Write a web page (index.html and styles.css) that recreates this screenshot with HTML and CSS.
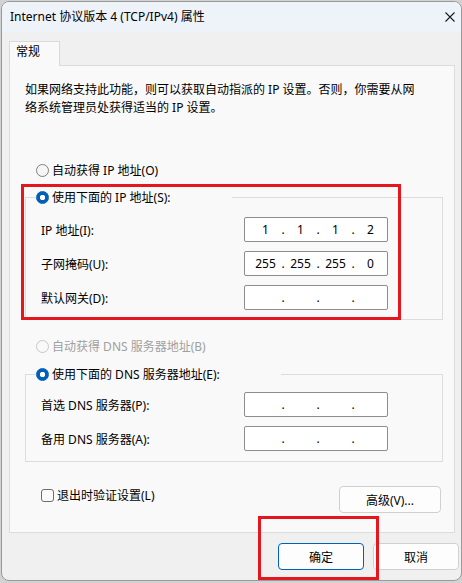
FILE: index.html
```html
<!DOCTYPE html>
<html lang="zh-CN">
<head>
<meta charset="utf-8">
<title>Internet 协议版本 4 (TCP/IPv4) 属性</title>
<link rel="stylesheet" href="styles.css">
</head>
<body>
<div class="window">
  <div class="titlebar">
    <span class="title">Internet 协议版本 4 (TCP/IPv4) 属性</span>
    <span class="close"><svg width="10" height="10" viewBox="0 0 10 10"><path d="M0.5 0.5 L9.5 9.5 M9.5 0.5 L0.5 9.5" stroke="#1b1b1b" stroke-width="1.1" fill="none"/></svg></span>
  </div>
  <div class="client">
    <div class="tab">常规</div>
    <div class="panel">
      <p class="intro">如果网络支持此功能，则可以获取自动指派的 IP 设置。否则，你需要从网<br>络系统管理员处获得适当的 IP 设置。</p>

      <div class="radio-row"><span class="radio"></span><span>自动获得 IP 地址(O)</span></div>

      <fieldset class="group">
        <legend><span class="radio checked"></span><span>使用下面的 IP 地址(S):</span></legend>
        <div class="fields">
          <span class="label">IP 地址(I):</span>
          <div class="ipbox"><span class="seg">1</span><span class="dot">.</span><span class="seg">1</span><span class="dot">.</span><span class="seg">1</span><span class="dot">.</span><span class="seg">2</span></div>
          <span class="label">子网掩码(U):</span>
          <div class="ipbox"><span class="seg">255</span><span class="dot">.</span><span class="seg">255</span><span class="dot">.</span><span class="seg">255</span><span class="dot">.</span><span class="seg">0</span></div>
          <span class="label">默认网关(D):</span>
          <div class="ipbox"><span class="seg"></span><span class="dot">.</span><span class="seg"></span><span class="dot">.</span><span class="seg"></span><span class="dot">.</span><span class="seg"></span></div>
        </div>
      </fieldset>

      <div class="radio-row disabled dns-auto"><span class="radio"></span><span>自动获得 DNS 服务器地址(B)</span></div>

      <fieldset class="group dns">
        <legend><span class="radio checked"></span><span>使用下面的 DNS 服务器地址(E):</span></legend>
        <div class="fields">
          <span class="label">首选 DNS 服务器(P):</span>
          <div class="ipbox"><span class="seg"></span><span class="dot">.</span><span class="seg"></span><span class="dot">.</span><span class="seg"></span><span class="dot">.</span><span class="seg"></span></div>
          <span class="label">备用 DNS 服务器(A):</span>
          <div class="ipbox"><span class="seg"></span><span class="dot">.</span><span class="seg"></span><span class="dot">.</span><span class="seg"></span><span class="dot">.</span><span class="seg"></span></div>
        </div>
      </fieldset>

      <div class="footer-row">
        <div class="check-row"><span class="checkbox"></span><span>退出时验证设置(L)</span></div>
        <button class="btn advanced">高级(V)...</button>
      </div>
    </div>
    <div class="actions">
      <button class="btn primary">确定</button>
      <button class="btn">取消</button>
    </div>
  </div>
</div>
<div class="mark mark-ip"></div>
<div class="mark mark-ok"></div>
</body>
</html>
```
FILE: styles.css
```css
* { box-sizing: border-box; }
html, body { margin: 0; padding: 0; }
body {
  width: 462px;
  height: 583px;
  overflow: hidden;
  position: relative;
  background: #d2d2d2;
  font-family: "Segoe UI", "Noto Sans", "Noto Sans CJK SC", sans-serif;
  font-size: 12px;
  color: #000;
}
.window {
  margin: 1px 0 0 1px;
  width: 461px;
  height: 580px;
  border: 1px solid #9a9a9a;
  border-radius: 8px;
  background: #f0f0f0;
  overflow: hidden;
}
.titlebar {
  height: 30px;
  background: #eef2f9;
  display: flex;
  align-items: center;
  justify-content: space-between;
  padding: 0 6px 0 8px;
}
.title { line-height: 16px; }
.close { display: flex; align-items: center; }
.client { padding: 9px 0 0 7px; }
.tab {
  position: relative;
  z-index: 1;
  width: 51px;
  height: 25px;
  margin-bottom: -1px;
  border: 1px solid #d9d9d9;
  border-bottom: none;
  background: #f9f9f9;
  padding-left: 6px;
  line-height: 20px;
}
.panel {
  width: 446px;
  height: 468px;
  border: 1px solid #dcdcdc;
  background: #f9f9f9;
  padding-top: 15px;
}
.intro {
  margin: 0 0 0 15px;
  line-height: 18px;
}
.radio-row {
  display: flex;
  align-items: center;
  gap: 3px;
  height: 16px;
  margin: 45px 0 0 26px;
}
.radio-row.dns-auto { margin-top: 18px; }
.disabled { color: #a0a0a0; }
.radio {
  width: 13px;
  height: 13px;
  border-radius: 50%;
  border: 1px solid #7f7f7f;
  background: #f6f6f6;
  flex: none;
}
.disabled .radio { border-color: #c8c8c8; background: #f9f9f9; }
.radio.checked {
  border-color: #005fb8;
  background: radial-gradient(circle, #ffffff 0 2.4px, #005fb8 3px);
}
.group {
  margin: 11px 11px 0 15px;
  padding: 12px 0 9px 0;
  border: 1px solid #dcdcdc;
  min-width: 0;
}
.group.dns {
  margin-top: 12px;
  padding: 10px 0 10px 0;
}
.group legend {
  margin-left: 10px;
  padding: 0 61px 0 0;
  height: 16px;
  display: flex;
  align-items: center;
  gap: 3px;
}
.fields {
  margin-left: 15px;
  display: grid;
  grid-template-columns: 203px 144px;
  row-gap: 9px;
  align-items: center;
}
.ipbox {
  height: 25px;
  border: 1px solid #8d8d8d;
  border-radius: 2px;
  background: #ffffff;
  display: flex;
  align-items: center;
  padding-left: 5px;
}
.seg { width: 31px; text-align: center; }
.dot { width: 4px; text-align: center; }
.footer-row {
  display: flex;
  justify-content: space-between;
  align-items: flex-start;
  margin: 24px 13px 0 31px;
}
.check-row {
  display: flex;
  align-items: center;
  gap: 3px;
  height: 16px;
  margin-top: 1px;
}
.checkbox {
  width: 13px;
  height: 13px;
  border: 1px solid #6c6c6c;
  border-radius: 3px;
  background: #fbfbfb;
}
.btn {
  width: 86px;
  height: 27px;
  border: 1px solid #d0d0d0;
  border-radius: 4px;
  background: #fdfdfd;
  font: inherit;
  color: #000;
  padding: 0;
}
.btn.advanced { width: 102px; }
.btn.primary { border-color: #005fb8; }
.actions {
  display: flex;
  justify-content: flex-end;
  gap: 9px;
  margin-top: 10px;
  padding-right: 2px;
}
.mark {
  position: absolute;
  border: 3px solid #e5171e;
}
.mark-ip { left: 21px; top: 184px; width: 380px; height: 136px; }
.mark-ok { left: 258px; top: 516px; width: 121px; height: 64px; }
```
